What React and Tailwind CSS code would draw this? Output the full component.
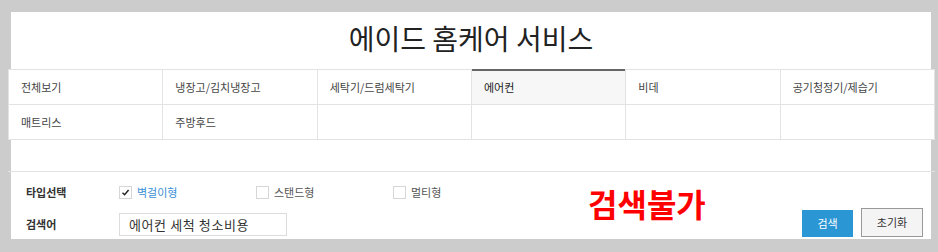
const CATEGORIES = [
  '전체보기',
  '냉장고/김치냉장고',
  '세탁기/드럼세탁기',
  '에어컨',
  '비데',
  '공기청정기/제습기',
  '매트리스',
  '주방후드',
  '',
  '',
  '',
  '',
];

const TYPES = [
  { label: '벽걸이형', checked: true },
  { label: '스탠드형', checked: false },
  { label: '멀티형', checked: false },
];

const Checkbox = ({ checked }) => (
  <span className="flex h-[13px] w-[13px] items-center justify-center border border-[#d6d6d6] bg-white">
    {checked && (
      <svg width="9" height="9" viewBox="0 0 9 9" fill="none">
        <path d="M1.5 4.8 L3.6 6.8 L7.6 2" stroke="#222" strokeWidth="1.4" />
      </svg>
    )}
  </span>
);

const App = () => {
  return (
    <div
      className="h-[252px] w-[938px] overflow-hidden bg-[#cccccc] pl-[11px] pt-[12px]"
      style={{ fontFamily: '"Noto Sans CJK KR", "Noto Sans", sans-serif' }}
    >
      <div className="flex h-[227px] w-[920px] flex-col bg-white">
        {/* Title */}
        <div className="flex h-[57px] items-center justify-center pb-[6px]">
          <h1 className="text-[28px] font-normal leading-none text-[#222]">에이드 홈케어 서비스</h1>
        </div>

        {/* Category table */}
        <div className="-ml-[3px] grid w-[927px] grid-cols-6 border-l border-t border-[#e3e3e3]">
          {CATEGORIES.map((name, i) => {
            const active = name === '에어컨';
            return (
              <div
                key={i}
                className={
                  active
                    ? 'relative flex h-[35px] items-center border-b border-r border-[#e3e3e3] bg-[#f7f7f7] pl-[12px] text-[11px] text-[#222]'
                    : 'relative flex h-[35px] items-center border-b border-r border-[#e3e3e3] bg-white pl-[12px] text-[11px] text-[#444]'
                }
              >
                {active && <span className="absolute -top-px left-0 right-0 h-[2px] bg-[#666]" />}
                {name}
              </div>
            );
          })}
        </div>

        <div className="h-[31px]" />

        {/* Search section */}
        <div className="relative -ml-[3px] flex w-[927px] flex-1 justify-between border-t border-[#e3e3e3] pl-[18px] pr-[12px]">
          <div className="flex flex-col pt-[10px]">
            <div className="flex h-[20px] items-center">
              <span className="w-[93px] text-[11px] font-bold text-[#333]">타입선택</span>
              {TYPES.map((t) => (
                <label key={t.label} className="flex w-[137px] items-center gap-[5px]">
                  <Checkbox checked={t.checked} />
                  <span className={t.checked ? 'text-[11px] text-[#3a8fd6]' : 'text-[11px] text-[#555]'}>
                    {t.label}
                  </span>
                </label>
              ))}
            </div>
            <div className="mt-[11px] flex h-[23px] items-center">
              <span className="w-[93px] text-[11px] font-bold text-[#333]">검색어</span>
              <div className="flex h-[23px] w-[168px] items-center border border-[#dcdcdc] pl-[9px] text-[13px] tracking-[0.6px] text-[#333]">
                에어컨 세척 청소비용
              </div>
            </div>
          </div>

          <span className="absolute left-[580px] top-[15px] text-[32px] font-bold leading-none text-[#ff0000]">
            검색불가
          </span>

          <div className="flex items-end gap-[8px] pb-[2px]">
            <button className="h-[27px] w-[51px] bg-[#2a96d4] text-[11px] text-white">검색</button>
            <button className="h-[29px] w-[62px] border border-[#999] bg-[#f4f4f4] text-[11px] text-[#333]">
              초기화
            </button>
          </div>
        </div>
      </div>
    </div>
  );
};

export default App;
